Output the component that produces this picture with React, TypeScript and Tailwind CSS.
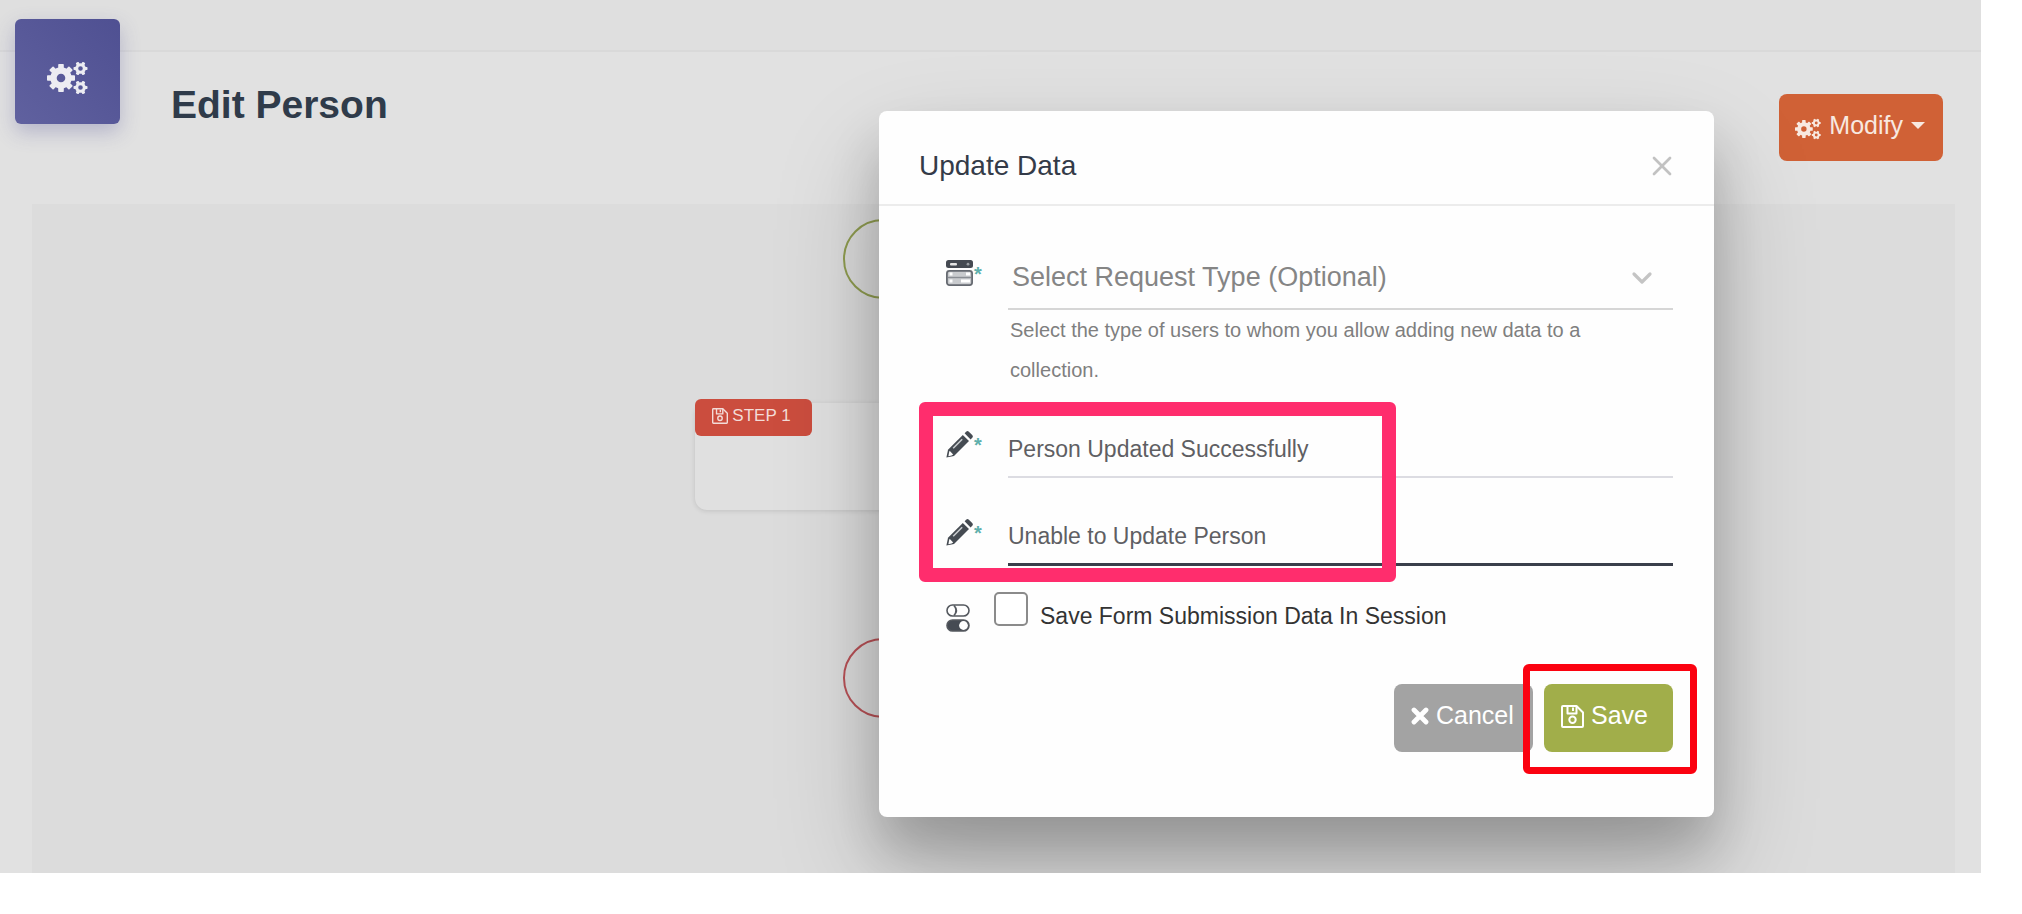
import { ChevronDown, X } from "lucide-react";

const messageFields = [
  {
    id: "success-message",
    label: "Success message",
    value: "Person Updated Successfully",
    line: "border-b-2 border-[#dcdce2]",
  },
  {
    id: "error-message",
    label: "Error message",
    value: "Unable to Update Person",
    line: "border-b-3 border-[#3a3f4b]",
  },
];

type IconProps = { className?: string };

type GearProps = { cx: number; cy: number; ring: number; width: number; reach: number; tooth: number; angles: number[] };

function Gear({ cx, cy, ring, width, reach, tooth, angles }: GearProps) {
  return (
    <g transform={`translate(${cx} ${cy})`}>
      <circle r={ring} fill="none" stroke="currentColor" strokeWidth={width} />
      {angles.map((angle) => (
        <rect
          key={angle}
          x={-tooth / 2}
          y={-reach}
          width={tooth}
          height={reach - ring}
          rx={0.8}
          fill="currentColor"
          transform={`rotate(${angle})`}
        />
      ))}
    </g>
  );
}

function CogsIcon({ className }: IconProps) {
  const eight = [0, 45, 90, 135, 180, 225, 270, 315];
  const six = [30, 90, 150, 210, 270, 330];
  return (
    <svg viewBox="0 0 41 34" className={className} aria-hidden="true">
      <Gear cx={14} cy={17} ring={7.5} width={6.4} reach={14} tooth={5.6} angles={eight} />
      <Gear cx={33.5} cy={7.5} ring={3.8} width={3} reach={7} tooth={3.2} angles={six} />
      <Gear cx={33.5} cy={26.5} ring={3.8} width={3} reach={7} tooth={3.2} angles={six} />
    </svg>
  );
}

function SaveIcon({ className }: IconProps) {
  return (
    <svg viewBox="0 0 23 23" className={className} fill="none" stroke="currentColor" strokeWidth="2" strokeLinejoin="round" aria-hidden="true">
      <path d="M2 1h13.5L22 7.5V21a1 1 0 0 1-1 1H2a1 1 0 0 1-1-1V2a1 1 0 0 1 1-1z" />
      <path d="M6.5 1v7.5h9V1M12 2.5v3.5" />
      <circle cx="11.5" cy="14.8" r="3.2" />
    </svg>
  );
}

function CrossIcon({ className }: IconProps) {
  return (
    <svg viewBox="0 0 18 18" className={className} aria-hidden="true">
      <path d="M3 3l12 12M15 3L3 15" stroke="currentColor" strokeWidth="4.8" strokeLinecap="round" />
    </svg>
  );
}

function PencilIcon({ className }: IconProps) {
  return (
    <svg viewBox="0 0 27 27" className={className} aria-hidden="true">
      <g fill="currentColor">
        <path d="M18.6 2.2l1.5-1.5a2 2 0 0 1 2.8 0l3.3 3.3a2 2 0 0 1 0 2.8l-1.6 1.6z" />
        <path d="M16.8 3.9l6.2 6.2L8 25 0.4 26.6 2 18.8z" />
      </g>
      <path d="M3.6 19.8l3.6 3.6-1.6 1.2-3.2.6.6-3.4z" fill="#fefefe" />
      <path d="M7.2 17.3l9-9" stroke="#c9cccf" strokeWidth="1.6" />
    </svg>
  );
}

function FormIcon() {
  return (
    <svg viewBox="0 0 27 26" className="h-[26px] w-[27px]" aria-hidden="true">
      <rect x="0" y="0" width="27" height="8" rx="2.5" fill="#454a52" />
      <rect x="4" y="3" width="7" height="2.4" rx="1" fill="#e5e5e5" />
      <circle cx="22" cy="4.2" r="1.4" fill="#9a9ea3" />
      <rect x="0.9" y="10.9" width="25.2" height="14.2" rx="2.5" fill="#c9cbce" stroke="#666a71" strokeWidth="1.8" />
      <path d="M3.5 14h3M20 14h4M3.5 21h3M15 21h9" stroke="#fff" strokeWidth="3" />
      <path d="M2 17.5h23" stroke="#8a8e94" strokeWidth="1.4" />
    </svg>
  );
}

function TogglesIcon() {
  return (
    <svg viewBox="0 0 24 28" className="h-7 w-6" aria-hidden="true">
      <rect x="1" y="1" width="22" height="11" rx="5.5" fill="#fff" stroke="#55595f" strokeWidth="1.6" />
      <path d="M8 1.5q4.500 5 0 10" fill="none" stroke="#55595f" strokeWidth="1.8" />
      <rect x="1" y="16" width="22" height="11" rx="5.5" fill="#464b53" stroke="#55595f" strokeWidth="1.6" />
      <circle cx="17.5" cy="21.5" r="4.4" fill="#fff" />
    </svg>
  );
}

function Required() {
  return <span className="pt-0.5 text-[20px] leading-6 font-bold text-[#5fb0ac]">*</span>;
}

function Workflow() {
  return (
    <main className="relative mr-[26px] ml-8 flex-1 bg-[#dcdcdc]">
      {/* Start node */}
      <div className="absolute top-[15px] left-[811px] size-[80px] rounded-full border-2 border-[#8f9c50]" />

      {/* Step node */}
      <div className="absolute top-[199px] left-[663px] h-[107px] w-[374px] rounded-xl bg-[#e0e0e0] shadow-[0_1px_5px_rgba(0,0,0,0.12)]" />
      <div className="absolute top-[195px] left-[663px] flex h-[37px] w-[117px] items-center justify-center gap-1 rounded-md bg-[#cb4d3e] pr-1 pb-1 text-[17px] text-[#f3dcd8]">
        <SaveIcon className="size-4" />
        STEP 1
      </div>

      {/* End node */}
      <div className="absolute top-[434px] left-[811px] size-[80px] rounded-full border-2 border-[#b85156]" />
    </main>
  );
}

function UpdateDataModal() {
  return (
    <div
      role="dialog"
      aria-labelledby="modal-title"
      className="w-[835px] rounded-lg bg-[#fefefe] shadow-[0_34px_50px_rgba(0,0,0,0.18),0_50px_110px_rgba(0,0,0,0.2)]"
    >
      <div className="flex h-[95px] items-center justify-between border-b-2 border-[#ececec] pt-4 pr-9 pl-10">
        <h2 id="modal-title" className="text-[28px] text-[#343b48]">Update Data</h2>
        <button type="button" aria-label="Close" className="text-[#c2c2c2]">
          <X className="size-8" strokeWidth={2} />
        </button>
      </div>

      <form className="pt-10 pr-[41px] pb-[65px] pl-[67px]">
        <div className="grid grid-cols-[62px_1fr]">
          <label htmlFor="request-type" aria-label="Request type" className="flex gap-px pt-3.5">
            <FormIcon />
            <Required />
          </label>
          <div>
            <div className="relative">
              <select
                id="request-type"
                className="h-16 w-full appearance-none border-b-2 border-[#d6d6d6] bg-transparent pl-1 text-[27px] text-[#858585]"
              >
                <option>Select Request Type (Optional)</option>
              </select>
              <ChevronDown className="pointer-events-none absolute top-4 right-[15px] size-8 text-[#c4c4c4]" strokeWidth={2.4} />
            </div>
            <p className="pr-16 pl-0.5 text-[20px] leading-10 text-[#7f7f7f]">
              Select the type of users to whom you allow adding new data to a collection.
            </p>
          </div>
        </div>

        <div className="relative mt-9 flex flex-col gap-9">
          {messageFields.map((field) => (
            <div key={field.id} className="grid grid-cols-[62px_1fr]">
              <label htmlFor={field.id} aria-label={field.label} className="flex gap-px pt-[5px]">
                <PencilIcon className="size-[27px] text-[#454b52]" />
                <Required />
              </label>
              <input
                id={field.id}
                type="text"
                defaultValue={field.value}
                className={`h-[52px] min-w-0 bg-transparent pb-1 text-[23px] text-[#5f5f63] outline-none ${field.line}`}
              />
            </div>
          ))}
          {/* Highlight around the two messages */}
          <div className="pointer-events-none absolute -top-6 -bottom-4 -left-[27px] w-[477px] rounded-md border-14 border-[#ff2d6d]" />
        </div>

        <div className="mt-[26px] flex items-start">
          <div className="w-12 pt-3">
            <TogglesIcon />
          </div>
          <input
            id="save-session"
            type="checkbox"
            className="size-[34px] appearance-none rounded-[5px] border-2 border-[#8b8b8b] bg-white"
          />
          <label htmlFor="save-session" className="pt-2 pl-3 text-[23px] leading-8 text-[#333333]">
            Save Form Submission Data In Session
          </label>
        </div>

        <div className="mt-[52px] flex justify-end gap-[11px]">
          <button
            type="button"
            className="flex h-[68px] w-[139px] items-center gap-[7px] rounded-lg bg-[#a3a3a3] pb-1 pl-[17px] text-[25px] text-white"
          >
            <CrossIcon className="size-[18px]" />
            Cancel
          </button>
          <div className="relative">
            <button
              type="button"
              className="flex h-[68px] w-[129px] items-center gap-[7px] rounded-lg bg-[#a1ae4a] pb-1 pl-[17px] text-[25px] text-white"
            >
              <SaveIcon className="size-[23px]" />
              Save
            </button>
            <div className="pointer-events-none absolute -top-5 -right-6 -bottom-[22px] -left-[21px] rounded-md border-7 border-[#fb0210]" />
          </div>
        </div>
      </form>
    </div>
  );
}

export default function App() {
  return (
    <div className="flex h-screen bg-white pr-[41px] pb-[41px] font-['Liberation_Sans',Arial,sans-serif]">
      <div className="relative flex flex-1 flex-col overflow-hidden bg-[#e1e1e1]">
        <div className="h-[52px] border-b-2 border-[#d9d9d9] bg-[#dfdfdf]" />
        <div className="absolute top-[19px] left-[15px] flex size-[105px] items-center justify-center rounded-md bg-linear-to-bl from-[#4f5092] to-[#60619f] pt-3 shadow-[0_8px_20px_rgba(80,80,150,0.3)]">
          <CogsIcon className="h-[34px] w-[41px] text-[#ececf2]" />
        </div>

        <header className="flex h-[152px] items-start justify-between pt-8 pr-[38px] pl-[171px]">
          <h1 className="text-[39px] leading-[42px] font-bold text-[#2f3b4a]">Edit Person</h1>
          <button
            type="button"
            className="mt-2.5 flex h-[67px] items-center rounded-lg bg-[#d06136] pr-[18px] pb-1 pl-4 text-[25px] text-[#f8e9e0]"
          >
            <CogsIcon className="mt-1.5 mr-2 h-[22px] w-[26px]" />
            Modify
            <span className="ml-2 border-x-7 border-t-7 border-x-transparent border-t-[#f8e9e0]" />
          </button>
        </header>

        <Workflow />

        <div className="absolute inset-0 flex items-start justify-end pt-[111px] pr-[267px]">
          <UpdateDataModal />
        </div>
      </div>
    </div>
  );
}
